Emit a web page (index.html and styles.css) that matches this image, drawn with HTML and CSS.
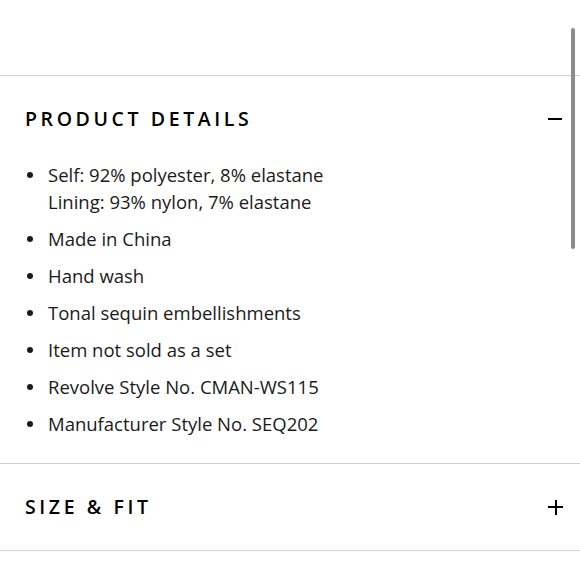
FILE: index.html
```html
<!DOCTYPE html>
<html lang="en">
<head>
<meta charset="utf-8">
<title>Product details</title>
<link rel="stylesheet" href="styles.css">
</head>
<body>
<div class="page">
  <div class="top-space"></div>
  <div class="accordion">
    <section class="acc-item">
      <div class="acc-header">
        <h2 class="acc-title">PRODUCT DETAILS</h2>
        <span class="icon-minus"></span>
      </div>
      <ul class="details">
        <li><span class="dot"></span><span class="txt">Self: 92% polyester, 8% elastane<br>Lining: 93% nylon, 7% elastane</span></li>
        <li><span class="dot"></span><span class="txt">Made in China</span></li>
        <li><span class="dot"></span><span class="txt">Hand wash</span></li>
        <li><span class="dot"></span><span class="txt">Tonal sequin embellishments</span></li>
        <li><span class="dot"></span><span class="txt">Item not sold as a set</span></li>
        <li><span class="dot"></span><span class="txt">Revolve Style No. CMAN-WS115</span></li>
        <li><span class="dot"></span><span class="txt">Manufacturer Style No. SEQ202</span></li>
      </ul>
    </section>
    <section class="acc-item">
      <div class="acc-header">
        <h2 class="acc-title">SIZE &amp; FIT</h2>
        <span class="icon-plus"></span>
      </div>
    </section>
  </div>
  <div class="scrollbar"></div>
</div>
</body>
</html>
```
FILE: styles.css
```css
html, body {
  margin: 0;
  padding: 0;
  background: #ffffff;
}
body {
  font-family: "Open Sans", "Liberation Sans", sans-serif;
  color: #1a1a1a;
}
.page {
  position: relative;
  width: 580px;
  height: 580px;
  overflow: hidden;
}
.top-space {
  height: 75px;
}
.accordion {
  border-top: 1px solid #d2d2d2;
}
.acc-item {
  border-bottom: 1px solid #d2d2d2;
}
.acc-header {
  height: 86px;
  display: flex;
  align-items: center;
  justify-content: space-between;
  padding: 0 17px 0 25px;
}
.acc-title {
  margin: -2px 0 0 0;
  font-size: 19.5px;
  font-weight: 600;
  letter-spacing: 3.6px;
  color: #000;
}
.icon-minus {
  width: 14px;
  height: 2px;
  margin-right: 1px;
  background: #000;
}
.icon-plus {
  position: relative;
  width: 15px;
  height: 15px;
}
.icon-plus::before,
.icon-plus::after {
  content: "";
  position: absolute;
  background: #000;
}
.icon-plus::before {
  left: 0;
  top: 6.5px;
  width: 15px;
  height: 2px;
}
.icon-plus::after {
  left: 6.5px;
  top: 0;
  width: 2px;
  height: 15px;
}
.details {
  list-style: none;
  margin: -1px 0 0 0;
  padding: 0 0 26px 27px;
  display: flex;
  flex-direction: column;
  gap: 10px;
}
.details li {
  display: flex;
  align-items: flex-start;
  font-size: 18.5px;
  line-height: 27px;
}
.dot {
  flex: 0 0 auto;
  width: 6px;
  height: 6px;
  border-radius: 50%;
  background: #1a1a1a;
  margin-top: 11px;
  margin-right: 15px;
}
.scrollbar {
  position: absolute;
  left: 571px;
  top: 28px;
  width: 4px;
  height: 221px;
  border-radius: 2px;
  background: #8c8c8c;
}
```
